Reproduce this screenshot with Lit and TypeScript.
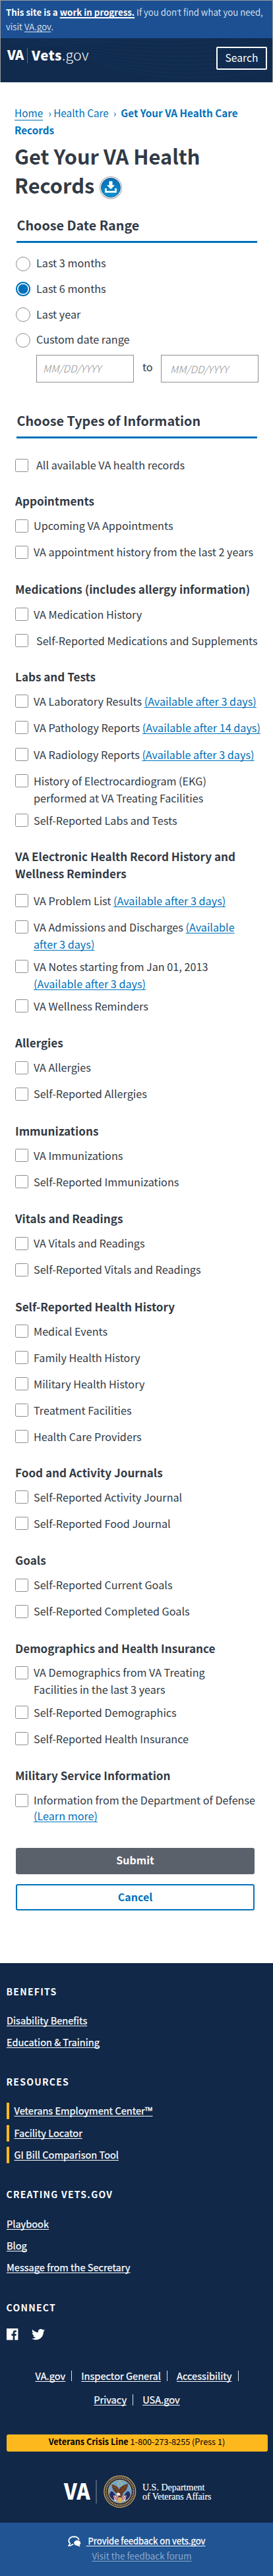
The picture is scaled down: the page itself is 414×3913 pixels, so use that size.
import { LitElement, html, svg, css, nothing } from 'lit';
import { customElement, property } from 'lit/decorators.js';

const base = css`
  :host, * { box-sizing: border-box; }
  a { color: inherit; text-decoration: underline; text-decoration-thickness: 1px; text-underline-offset: 2px; text-decoration-skip-ink: none; }
`;

interface Item { text: string; more?: string; link?: string; linkRest?: string; breakLink?: boolean; indent?: boolean; tight?: boolean; tall?: boolean }
interface Group { title: string[]; items: Item[]; mod?: string }

const AFTER3 = '(Available after 3 days)';

const groups: Group[] = [
  { title: ['Appointments'], items: [
    { text: 'Upcoming VA Appointments' },
    { text: 'VA appointment history from the last 2 years' },
  ] },
  { title: ['Medications (includes allergy information)'], mod: 'loose', items: [
    { text: 'VA Medication History' },
    { text: 'Self-Reported Medications and Supplements', indent: true },
  ] },
  { title: ['Labs and Tests'], mod: 'short', items: [
    { text: 'VA Laboratory Results', link: AFTER3 },
    { text: 'VA Pathology Reports', link: '(Available after 14 days)', tall: true },
    { text: 'VA Radiology Reports', link: AFTER3 },
    { text: 'History of Electrocardiogram (EKG)', more: 'performed at VA Treating Facilities' },
    { text: 'Self-Reported Labs and Tests' },
  ] },
  { title: ['VA Electronic Health Record History and', 'Wellness Reminders'], mod: 'wide', items: [
    { text: 'VA Problem List', link: AFTER3 },
    { text: 'VA Admissions and Discharges', link: '(Available', linkRest: 'after 3 days)' },
    { text: 'VA Notes starting from Jan 01, 2013', link: AFTER3, breakLink: true },
    { text: 'VA Wellness Reminders' },
  ] },
  { title: ['Allergies'], items: [{ text: 'VA Allergies' }, { text: 'Self-Reported Allergies' }] },
  { title: ['Immunizations'], items: [{ text: 'VA Immunizations' }, { text: 'Self-Reported Immunizations' }] },
  { title: ['Vitals and Readings'], items: [{ text: 'VA Vitals and Readings' }, { text: 'Self-Reported Vitals and Readings' }] },
  { title: ['Self-Reported Health History'], mod: 'short', items: [
    { text: 'Medical Events' }, { text: 'Family Health History' }, { text: 'Military Health History' },
    { text: 'Treatment Facilities' }, { text: 'Health Care Providers' },
  ] },
  { title: ['Food and Activity Journals'], items: [{ text: 'Self-Reported Activity Journal' }, { text: 'Self-Reported Food Journal' }] },
  { title: ['Goals'], items: [{ text: 'Self-Reported Current Goals' }, { text: 'Self-Reported Completed Goals' }] },
  { title: ['Demographics and Health Insurance'], items: [
    { text: 'VA Demographics from VA Treating', more: 'Facilities in the last 3 years' },
    { text: 'Self-Reported Demographics' },
    { text: 'Self-Reported Health Insurance' },
  ] },
  { title: ['Military Service Information'], items: [
    { text: 'Information from the Department of Defense', link: '(Learn more)', breakLink: true, tight: true },
  ] },
];

@customElement('site-header')
class SiteHeader extends LitElement {
  static styles = [base, css`
    :host { display: block; border: 1px solid #9a9da1; border-bottom: 0; color: #fff; }
    .wip { height: 57px; padding: 7px 0 0 8px; background: #1d5093; font-size: 13.3px; line-height: 21.3px; font-weight: 350; color: #dfe7f1; white-space: nowrap; }
    .wip b { color: #fff; }
    .wip b a { text-decoration-thickness: 1.5px; }
    .q { font-family: "Open Sans", sans-serif; }
    .bar { position: relative; display: flex; justify-content: space-between; align-items: flex-start; height: 67px; padding: 13px 8px 0 10px; background: #112b4e; }
    .waves { position: absolute; inset: 0; width: 100%; height: 100%; }
    .logo { position: relative; display: flex; line-height: 24px; font-size: 20px; font-weight: 900; }
    .va { letter-spacing: -.4px; font-size: 20px; width: 31px; border-right: 1px solid #5b6d86; height: 23px; margin-top: 2px; line-height: 20px; }
    .vets { margin-left: 6px; font-size: 20.3px; letter-spacing: .6px; }
    .gov { font-weight: 300; font-size: 21.4px; letter-spacing: .2px; }
    .search { position: relative; width: 77px; height: 35px; border: 2px solid #fff; border-radius: 2px; background: none; font-size: 15.7px; line-height: 30px; text-align: center; }
  `];
  render() {
    return html`
      <div class="wip"><b>This site is a <a>work in progress.</a></b> If you don<span class="q">’</span>t find what you need,<br>visit <a>VA.gov</a>.</div>
      <div class="bar">
        <svg class="waves" viewBox="0 0 412 67" preserveAspectRatio="none" fill="none" stroke="#12335a" stroke-width=".8">
          ${[0, 1, 2, 3, 4, 5, 6, 7, 8, 9, 10].map(i => svg`<path d="M${150 - i * 12} ${38 - i * 5}C${220 + i * 4} ${64 - i * 6} ${310 + i * 3} ${66 - i * 7} 412 ${48 - i * 7}"/>`)}
          ${[0, 1, 2, 3].map(i => svg`<path d="M0 ${12 - i * 4}C50 ${8 - i * 2} 110 ${14 - i * 3} 190 ${2 - i * 3}"/>`)}
        </svg>
        <div class="logo"><span class="va">VA</span><span class="vets">Vets</span><span class="gov">.gov</span></div>
        <div class="search">Search</div>
      </div>`;
  }
}

@customElement('check-row')
class CheckRow extends LitElement {
  @property({ attribute: false }) item!: Item;
  static styles = [base, css`
    :host { display: flex; padding-bottom: 12px; }
    .box { flex: none; width: 20px; height: 20px; margin-bottom: 8px; border: 1px solid #8a8d91; border-radius: 2.5px; background: #fff; }
    .tall { margin-bottom: 9px; }
    .text { margin: -3.6px 0 -.4px 8px; line-height: 26px; white-space: nowrap; }
    .indent { margin-left: 12px; }
    .tight { line-height: 24px; margin-top: -2.6px; }
    a { color: #0071bb; }
  `];
  render() {
    const i = this.item;
    return html`<span class="box ${i.tall ? 'tall' : ''}"></span><span class="text ${i.indent ? 'indent' : ''} ${i.tight ? 'tight' : ''}">${i.text}${i.more ? html`<br>${i.more}` : nothing}${i.link
      ? html`${i.breakLink ? html`<br>` : ' '}<a>${i.link}${i.linkRest ? html`<br>${i.linkRest}` : nothing}</a>` : nothing}</span>`;
  }
}

@customElement('records-form')
class RecordsForm extends LitElement {
  static styles = [base, css`
    :host { display: block; height: 2857px; padding: 33.8px 22px 0; color: #323a45; font-size: 16.2px; }
    .crumbs { color: #0071bb; font-size: 15.35px; line-height: 25.7px; white-space: nowrap; }
    .crumbs a { text-underline-offset: 4px; margin-right: 8px; }
    .crumbs i { display: inline-block; width: 8px; font-style: normal; }
    .crumbs i.wide { margin-left: 7px; width: 11.5px; }
    .crumbs b { font-size: 15.25px; }
    h1 { margin: 4.5px 0 0; font-size: 30.8px; line-height: 44px; white-space: nowrap; }
    h1 .last { display: flex; align-items: center; height: 44px; }
    h1 svg { flex: none; margin: 8px 0 0 6px; }
    h2 { margin: 25px 2px 0 3px; padding: 0 0 10px .5px; border-bottom: 3px solid #0071bb; font-size: 19.75px; line-height: 28px; white-space: nowrap; }
    .radios { padding: 12.7px 0 0 2px; }
    .radio { display: flex; align-items: center; gap: 9px; height: 38.67px; }
    .radio span { padding-bottom: 3px; }
    .dot { flex: none; width: 22px; height: 22px; border: 1px solid #8a8d91; border-radius: 50%; }
    .on { border: 2px solid #0071bb; background: radial-gradient(circle, #0071bb 7px, #fff 7.7px); }
    .dates { display: flex; margin: 2.6px 0 0 33px; }
    .date { width: 148px; height: 42px; padding-left: 9px; border: 1px solid #8a8d91; color: #8f9194; font-size: 15.5px; font-style: italic; font-weight: 300; line-height: 38px; }
    .date.end { padding: 1px 0 0 13px; }
    .to { width: 41px; padding-left: 13px; line-height: 36px; }
    .types { margin-top: 44px; }
    .all { margin: 31px 0 11.7px 1px; }
    .groups { margin-left: 1px; }
    h3 { margin: 0 0 14.4px; font-size: 17.1px; line-height: 26px; white-space: nowrap; }
    .group { margin-bottom: 13.1px; }
    .loose { margin-bottom: 11.6px; }
    .loose h3 { margin-bottom: 15.6px; }
    .wide h3 { margin-bottom: 18.2px; }
    .short { margin-bottom: 11.6px; }
    .btn { width: 362px; height: 40px; margin: 0 0 15px 2px; border-radius: 3px; background: #5b616b; color: #fff; font-weight: 700; font-size: 16px; line-height: 37px; text-align: center; }
    .submit { margin-top: 25px; }
    .cancel { background: #fff; border: 2px solid #0071bb; color: #0071bb; line-height: 34px; }
  `];
  render() {
    return html`
      <div class="crumbs"><a>Home</a><i>›</i>Health Care<i class="wide">›</i><b>Get Your VA Health Care<br>Records</b></div>
      <h1>Get Your VA Health<div class="last">Records
        <svg width="38" height="38" viewBox="0 0 38 38">
          <defs><linearGradient id="g" x1="0" y1="0" x2="0" y2="1"><stop offset="0" stop-color="#0b6db5"/><stop offset="1" stop-color="#0a94d3"/></linearGradient></defs>
          <circle cx="19" cy="19.6" r="17.2" fill="#d3d3d3"/><circle cx="19" cy="19" r="17" fill="#a9a9a9"/>
          <circle cx="19" cy="19" r="16" fill="#fff"/><circle cx="19" cy="19" r="14.6" fill="url(#g)" stroke="#07508d" stroke-width=".8"/>
          <path fill="#fff" d="M16.5 9.3h5v6h3.6L19 21.4 12.9 15.3h3.6zM10.200 20h2.600v4h12.400v-4h2.600v6.800H10.200z"/>
        </svg></div></h1>
      <h2>Choose Date Range</h2>
      <div class="radios">
        ${['Last 3 months', 'Last 6 months', 'Last year', 'Custom date range'].map((t, n) => html`<div class="radio"><div class="dot ${n === 1 ? 'on' : ''}"></div><span>${t}</span></div>`)}
      </div>
      <div class="dates"><div class="date">MM/DD/YYYY</div><div class="to">to</div><div class="date end">MM/DD/YYYY</div></div>
      <h2 class="types">Choose Types of Information</h2>
      <check-row class="all" .item=${{ text: 'All available VA health records', indent: true }}></check-row>
      <div class="groups">${groups.map(g => html`
        <section class="group ${g.mod ?? ''}">
          <h3>${g.title[0]}${g.title[1] ? html`<br>${g.title[1]}` : nothing}</h3>
          ${g.items.map(i => html`<check-row .item=${i}></check-row>`)}
        </section>`)}</div>
      <div class="btn submit">Submit</div>
      <div class="btn cancel">Cancel</div>`;
  }
}

@customElement('site-footer')
class SiteFooter extends LitElement {
  static styles = [base, css`
    :host { display: block; color: #fff; }
    .main { height: 850px; padding: 30.6px 8.5px 0 9.5px; background: #112849; }
    h4 { margin: 0; font-size: 14px; line-height: 24px; letter-spacing: 1.25px; }
    .links { padding: 20.4px 0 26.7px .5px; font-size: 14.6px; font-weight: 400; -webkit-text-stroke: .25px #fff; }
    .making { padding-bottom: 28.1px; }
    .link { height: 33.2px; line-height: 24px; white-space: nowrap; }
    .bars { padding-bottom: 27.4px; }
    .bars .link { display: flex; }
    .bars .link::before { content: ""; width: 3.5px; height: 25px; margin-right: 8px; background: #fdb81e; }
    .tm { font-family: "Open Sans", sans-serif; font-size: 15.5px; }
    .social { display: flex; gap: 20px; padding: 19.7px 0 0 .8px; }
    .legal { display: flex; flex-wrap: wrap; justify-content: center; margin: 35.4px 0 0; font-size: 14.65px; line-height: 36.4px; -webkit-text-stroke: .25px #fff; }
    .legal span { display: flex; align-items: center; }
    .legal .sep::after { content: ""; width: 1px; height: 16.5px; margin: 1px 13.8px 0 9.3px; background: #dfe3e8; }
    .legal .row { display: flex; justify-content: center; width: 100%; }
    .row1 { padding-left: 14px; }
    .crisis { height: 26px; margin-top: 34.5px; border-radius: 3px; background: #fdb81e; color: #000; font-size: 12.7px; line-height: 22.5px; text-align: center; }
    .brand { display: block; margin: 33px 0 0 84px; }
    .feedback { display: grid; justify-items: center; align-content: start; height: 81px; padding-top: 17px; background: #205493; font-size: 13.1px; line-height: 22px; }
    .give { display: flex; align-items: center; gap: 8px; -webkit-text-stroke: .3px #fff; white-space: pre; }
    .forum { margin-left: 16px; font-size: 13.4px; color: #8fa9cb; }
  `];
  render() {
    return html`
      <div class="main">
        <h4>BENEFITS</h4>
        <div class="links"><div class="link"><a>Disability Benefits</a></div><div class="link"><a>Education &amp; Training</a></div></div>
        <h4>RESOURCES</h4>
        <div class="links bars"><div class="link"><a>Veterans Employment Center<span class="tm">™</span></a></div><div class="link"><a>Facility Locator</a></div><div class="link"><a>GI Bill Comparison Tool</a></div></div>
        <h4>CREATING VETS.GOV</h4>
        <div class="links making"><div class="link"><a>Playbook</a></div><div class="link"><a>Blog</a></div><div class="link"><a>Message from the Secretary</a></div></div>
        <h4>CONNECT</h4>
        <div class="social">
          <svg width="18" height="18" viewBox="0 0 18 18"><path fill="#fff" d="M0 0h17.400v17.400h-5.100v-6.500h2.200l.35-2.600h-2.550V6.700c0-.75.25-1.250 1.300-1.250h1.350V3.100c-.25 0-1.050-.1-2-.1-2 0-3.300 1.200-3.300 3.400v1.900H7.400v2.600h2.250v6.500H0z"/></svg>
          <svg width="20" height="18" viewBox="0 0 24 21.600"><path fill="#fff" d="M24 3.400c-.9.400-1.800.7-2.800.8 1-.6 1.800-1.600 2.200-2.700-1 .6-2 1-3.100 1.200A4.900 4.900 0 0 0 11.900 7.200 14 14 0 0 1 1.700 2 4.900 4.900 0 0 0 3.200 8.600c-.8 0-1.600-.2-2.200-.6v.1c0 2.400 1.700 4.400 3.900 4.800-.7.2-1.500.2-2.200.1.600 2 2.400 3.400 4.600 3.400A9.900 9.900 0 0 1 0 18.500a14 14 0 0 0 7.500 2.200c9.100 0 14.300-7.700 14-14.600 1-.7 1.800-1.600 2.500-2.700z"/></svg>
        </div>
        <div class="legal">
          <div class="row row1"><span class="sep"><a>VA.gov</a></span><span class="sep"><a>Inspector General</a></span><span class="sep"><a>Accessibility</a></span></div>
          <div class="row"><span class="sep"><a>Privacy</a></span><span><a>USA.gov</a></span></div>
        </div>
        <div class="crisis"><b>Veterans Crisis Line</b> 1-800-273-8255 (Press 1)</div>
        <svg class="brand" width="236" height="56" viewBox="0 0 236 56">
          <text x="3" y="40" fill="#fff" font-size="33" font-weight="900" textLength="39.500" lengthAdjust="spacingAndGlyphs">VA</text>
          <path d="M52 10v36" stroke="#8492a6"/>
          <g transform="translate(87.800 27.700)">
            <circle r="24.500" fill="#d8b45c"/><circle r="23.300" fill="#171d45"/>
            <circle r="20.800" fill="none" stroke="#c9a64f" stroke-width="3" stroke-dasharray="1.300 1.100"/>
            <circle r="18" fill="#d8b45c"/><circle r="17.200" fill="#6ea3cb"/>
            <path d="M-16 5Q-14-3-10 1L-4 8-6 14Q-14 12-16 5ZM16 5Q14-3 10 1L4 8 6 14Q14 12 16 5Z" fill="#262c60"/>
            <path d="M-10 6l6 0 2 9-6-1zM10 6l-6 0-2 9 6-1z" fill="#d9dce8"/>
            <path d="M-9 7l5 7M-6 6l4 8M9 7l-5 7M6 6l-4 8" stroke="#b5434c" stroke-width="1.200"/>
            <path d="M-12.500-11Q-3-9-1.500-3Q1-9 12.500-12Q12-3 5 2L3 9H-2L-5 3Q-12-2-12.500-11Z" fill="#653a23"/>
            <path d="M-10-8Q-5-6-2 1M11-9Q5-6 2 1" stroke="#8c5a36" fill="none"/>
            <path d="M-5 3Q-3 0 0 3L1 6-4 6Z" fill="#f3efe4"/>
            <path d="M-2 9h4l2 6-4 2-3-2z" fill="#dfb144"/>
            <g fill="#e9cf55"><circle cx="0" cy="-14.500" r="1.100"/><circle cx="-3" cy="-12" r="1.100"/><circle cx="3" cy="-12" r="1.100"/><circle cx="-1.600" cy="-9" r="1"/><circle cx="1.800" cy="-9" r="1"/></g>
          </g>
          <g fill="#fff" font-family="Liberation Serif, serif" font-size="14" stroke="#fff" stroke-width=".15">
            <text x="122" y="26" textLength="94.500" lengthAdjust="spacingAndGlyphs">U.S. Department</text>
            <text x="122" y="40" textLength="104.500" lengthAdjust="spacingAndGlyphs">of Veterans Affairs</text>
          </g>
        </svg>
      </div>
      <div class="feedback">
        <div class="give"><svg width="20" height="17" viewBox="0 0 20 17"><path d="M3.200 11.200A5.800 5 0 0 1 1.300 7C1.300 3.700 4.600 1.300 9 1.300c4 0 7.200 2 7.700 4.800" fill="none" stroke="#fff" stroke-width="1.900"/><path d="M3.200 10.800Q3.500 12.800 1 14.800 4.500 15.200 7 13.200L8.300 13.200" fill="none" stroke="#fff" stroke-width="1.700"/><path d="M14.300 6.800c2.800 0 4.900 1.800 4.900 4 0 1.300-.6 2.400-1.700 3.100.1 1 .6 1.700 1.500 2.300-1.700.2-3-.3-4-1.300-3.300.2-5.700-1.600-5.700-4.100 0-2.200 2.200-4 5-4z" fill="#fff"/></svg><a> Provide feedback on vets.gov</a></div>
        <a class="forum">Visit the feedback forum</a>
      </div>`;
  }
}

@customElement('app-root')
class AppRoot extends LitElement {
  static styles = css`
    :host { display: block; height: 3913px; overflow: hidden; background: #fff; font-family: "Noto Sans CJK SC", "Open Sans", sans-serif; }
  `;
  render() {
    return html`<site-header></site-header><records-form></records-form><site-footer></site-footer>`;
  }
}
